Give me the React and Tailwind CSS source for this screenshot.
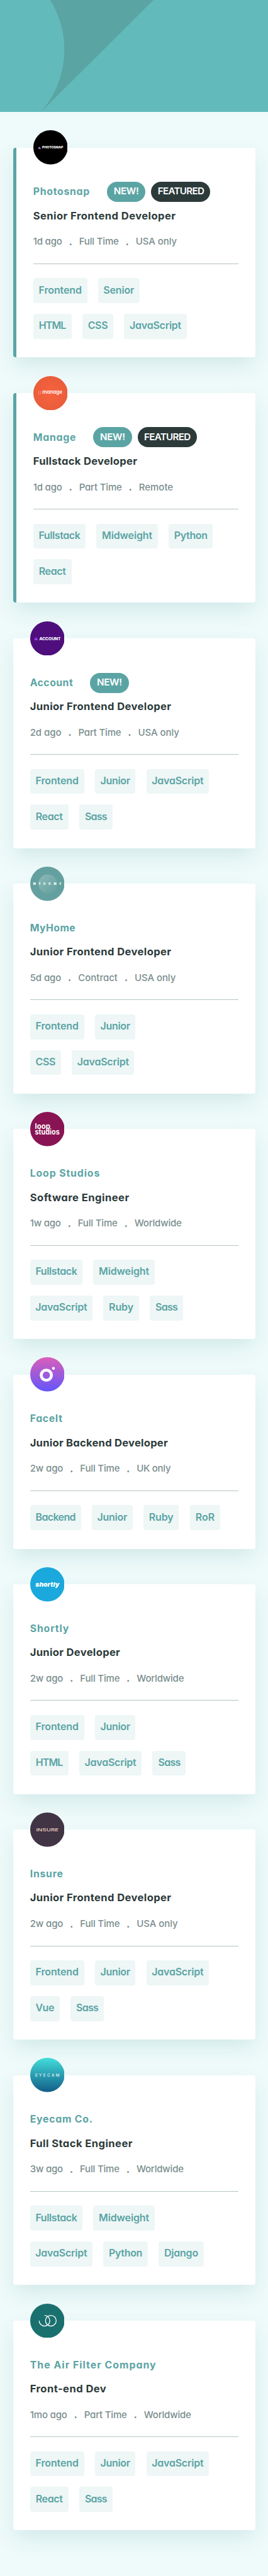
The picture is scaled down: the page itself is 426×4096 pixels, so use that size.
import React, { useLayoutEffect, useRef, useState } from "react";

// Spreads a label's letters so that it takes the given width.
function Fit({ width, className = "", children }) {
  const ref = useRef(null);
  const [spacing, setSpacing] = useState(0);
  useLayoutEffect(() => {
    const natural = ref.current.getBoundingClientRect().width;
    setSpacing((width - natural) / children.length);
  }, []);
  return (
    <span ref={ref} className={`whitespace-pre ${className}`} style={{ letterSpacing: `${spacing}px` }}>
      {children}
    </span>
  );
}

const LOGOS = {
  photosnap: (
    <>
      <circle cx="36" cy="36" r="36" fill="#000" />
      <path d="M10 39 L13 34 L16 39Z" fill="#6d6cf0" />
      <path d="M10 39 L11.6 36.4 L16 39Z" fill="#e88a8a" />
      <text x="18.5" y="38.3" fontSize="6.1" fontWeight="800" fill="#fff" textLength="44" lengthAdjust="spacingAndGlyphs">PHOTOSNAP</text>
    </>
  ),
  manage: (
    <>
      <circle cx="36" cy="36" r="36" fill="url(#manageFill)" />
      <g fill="#fff">
        <circle cx="11.3" cy="33" r="0.8" /><circle cx="15" cy="33" r="0.8" />
        <circle cx="11.3" cy="36.7" r="0.8" /><circle cx="15" cy="36.7" r="0.8" />
      </g>
      <text x="18.8" y="37.5" fontSize="10.4" fontWeight="600" fill="#fff" textLength="42" lengthAdjust="spacingAndGlyphs">manage</text>
    </>
  ),
  account: (
    <>
      <circle cx="36" cy="36" r="36" fill="#4e0f7c" />
      <path d="M8 39.5 L11.5 33 L13 35.6 L14 33.5 L16 39.5Z" fill="#9a3df0" />
      <text x="19" y="39" fontSize="7.6" fontWeight="800" fill="#fff" textLength="45" lengthAdjust="spacingAndGlyphs">ACCOUNT</text>
    </>
  ),
  myhome: (
    <>
      <circle cx="36" cy="36" r="36" fill="#64a09f" />
      <circle cx="37" cy="36" r="19.8" fill="url(#homeFill)" />
      <text x="6.4 17.5 27.8 38.2 49.3 61.2" y="38.2" fontSize="5.8" fontWeight="800" fill="#fff">MYHOME</text>
    </>
  ),
  loop: (
    <>
      <circle cx="36" cy="36" r="36" fill="#891454" />
      <g fill="#fff" fontSize="14.6" fontWeight="700">
        <text x="10" y="35.3" textLength="32" lengthAdjust="spacingAndGlyphs">loop</text>
        <text x="10" y="47.3" textLength="51.6" lengthAdjust="spacingAndGlyphs">studios</text>
      </g>
    </>
  ),
  faceit: (
    <>
      <circle cx="36" cy="36" r="36" fill="url(#faceFill)" />
      <circle cx="33.8" cy="37.7" r="10.7" fill="none" stroke="#fff" strokeWidth="6.1" />
      <circle cx="48.7" cy="23.4" r="2.9" fill="#fff" />
    </>
  ),
  shortly: (
    <>
      <circle cx="36" cy="36" r="36" fill="#1ba8dc" />
      <text x="11" y="40.5" fontSize="12.5" fontWeight="900" fontStyle="italic" fill="#fff" textLength="50" lengthAdjust="spacingAndGlyphs">shortly</text>
    </>
  ),
  insure: (
    <>
      <circle cx="36" cy="36" r="36" fill="#413444" />
      <text x="12.5" y="39.2" fontSize="8.6" fontWeight="500" fill="#f3d3c4" textLength="47" lengthAdjust="spacingAndGlyphs">INSURE</text>
    </>
  ),
  eyecam: (
    <>
      <circle cx="36" cy="36" r="36" fill="url(#eyeFill)" />
      <text x="10.4" y="39.2" fontSize="8.4" fontWeight="400" fill="#fff" textLength="51">EYECAM</text>
    </>
  ),
  airfilter: (
    <>
      <circle cx="36" cy="36" r="36" fill="#1a706f" />
      <g fill="none" stroke="#fff" strokeWidth="1.7">
        <path d="M18.8 35.7 A11.2 11.2 0 1 0 30 24.5" />
        <circle cx="43.3" cy="35.7" r="11.2" />
      </g>
    </>
  ),
};

const TAG = {
  Frontend: ["w-[85.9px]", 68.3],
  Senior: ["w-[65.8px]", 49],
  HTML: ["w-[60.9px]", 42.8],
  CSS: ["w-[49.2px]", 31.6],
  JavaScript: ["w-[99.3px]", 82],
  Fullstack: ["w-[83.4px]", 66],
  Midweight: ["w-[97.3px]", 80],
  Python: ["w-[70.5px]", 53],
  React: ["w-[60.9px]", 43],
  Junior: ["w-[64.5px]", 47.5],
  Sass: ["w-[53px]", 35],
  Ruby: ["w-[56.5px]", 39],
  Backend: ["w-[81.1px]", 63.5],
  RoR: ["w-[48.5px]", 30.2],
  Vue: ["w-[47px]", 29.4],
  Django: ["w-[71.7px]", 54],
};

const META = {
  "1d ago": 46, "2d ago": 49.8, "5d ago": 49.6, "1w ago": 49, "2w ago": 52.6, "3w ago": 52.2, "1mo ago": 59,
  "Full Time": 63, "Part Time": 68, Contract: 62.6,
  "USA only": 65.3, "UK only": 54, Remote: 54.5, Worldwide: 75,
};

const JOBS = [
  { id: "photosnap", name: ["Photosnap", 90.3], fresh: true, featured: true, title: ["Senior Frontend Developer", 226.8], meta: ["1d ago", "Full Time", "USA only"], tags: [["Frontend", "Senior"], ["HTML", "CSS", "JavaScript"]] },
  { id: "manage", name: ["Manage", 68.5], fresh: true, featured: true, title: ["Fullstack Developer", 165.5], meta: ["1d ago", "Part Time", "Remote"], tags: [["Fullstack", "Midweight", "Python"], ["React"]] },
  { id: "account", name: ["Account", 68.5], fresh: true, title: ["Junior Frontend Developer", 224.8], meta: ["2d ago", "Part Time", "USA only"], tags: [["Frontend", "Junior", "JavaScript"], ["React", "Sass"]] },
  { id: "myhome", name: ["MyHome", 72.5], title: ["Junior Frontend Developer", 224.8], meta: ["5d ago", "Contract", "USA only"], tags: [["Frontend", "Junior"], ["CSS", "JavaScript"]] },
  { id: "loop", name: ["Loop Studios", 111.5], title: ["Software Engineer", 158], meta: ["1w ago", "Full Time", "Worldwide"], tags: [["Fullstack", "Midweight"], ["JavaScript", "Ruby", "Sass"]] },
  { id: "faceit", name: ["FaceIt", 52], title: ["Junior Backend Developer", 219.3], meta: ["2w ago", "Full Time", "UK only"], tags: [["Backend", "Junior", "Ruby", "RoR"]] },
  { id: "shortly", name: ["Shortly", 62.5], title: ["Junior Developer", 143.5], meta: ["2w ago", "Full Time", "Worldwide"], tags: [["Frontend", "Junior"], ["HTML", "JavaScript", "Sass"]] },
  { id: "insure", name: ["Insure", 53], title: ["Junior Frontend Developer", 224.8], meta: ["2w ago", "Full Time", "USA only"], tags: [["Frontend", "Junior", "JavaScript"], ["Vue", "Sass"]] },
  { id: "eyecam", name: ["Eyecam Co.", 100], title: ["Full Stack Engineer", 163.2], meta: ["3w ago", "Full Time", "Worldwide"], tags: [["Fullstack", "Midweight"], ["JavaScript", "Python", "Django"]] },
  { id: "airfilter", name: ["The Air Filter Company", 201], title: ["Front-end Dev", 121.5], meta: ["1mo ago", "Part Time", "Worldwide"], tags: [["Frontend", "Junior", "JavaScript"], ["React", "Sass"]] },
];

function Dot() {
  return <span className="w-[27px] text-center text-[17px] font-semibold">.</span>;
}

function JobCard({ job }) {
  return (
    <article
      className={`relative rounded-[4px] bg-white pt-[54.6px] pr-[26.4px] pb-[29.4px] pl-[26.5px] shadow-[0_14px_32px_-3px_rgba(91,164,164,0.2)] ${
        job.featured ? "border-l-[5.3px] border-[#5ba4a4]" : ""
      }`}
    >
      <svg viewBox="0 0 72 72" className="absolute -top-[27.3px] left-[26.5px] size-[54.6px]">
        {LOGOS[job.id]}
      </svg>
      <div className="flex h-[31.9px] items-center">
        <Fit width={job.name[1]} className="text-[15.8px] font-bold text-[#5ba4a4]">{job.name[0]}</Fit>
        {job.fresh && (
          <span className="ml-[27px] flex h-[31.9px] w-[61.4px] items-center justify-center rounded-full bg-[#5ba4a4] pb-[0.5px] text-[15.2px] font-semibold text-white">
            <Fit width={39.8}>NEW!</Fit>
          </span>
        )}
        {job.featured && (
          <span className="ml-[9.1px] flex h-[31.9px] w-[94px] items-center justify-center rounded-full bg-[#2c3a3a] pb-[0.5px] text-[15.2px] font-semibold text-white">
            <Fit width={73.5}>FEATURED</Fit>
          </span>
        )}
      </div>
      <h2 className="flex h-[44px] items-center text-[16.6px] font-bold text-[#2c3a3a]">
        <Fit width={job.title[1]}>{job.title[0]}</Fit>
      </h2>
      <div className="flex h-[39px] items-center text-[15px] font-medium text-[#7b8e8e]">
        <Fit width={META[job.meta[0]]}>{job.meta[0]}</Fit>
        <Dot />
        <Fit width={META[job.meta[1]]}>{job.meta[1]}</Fit>
        <Dot />
        <Fit width={META[job.meta[2]]}>{job.meta[2]}</Fit>
      </div>
      <div className="mt-[14.6px] h-[0.8px] bg-[#b7c4c4]" />
      <div className="mt-[22.9px] flex flex-col gap-[17px]">
        {job.tags.map((row, i) => (
          <div key={i} className="flex gap-[17.3px]">
            {row.map((tag) => (
              <span
                key={tag}
                className={`flex h-[39.7px] items-center justify-center rounded-[4px] bg-[#eef6f6] pb-[3.2px] text-[16px] font-semibold text-[#5ba4a4] ${TAG[tag][0]}`}
              >
                <Fit width={TAG[tag][1]}>{tag}</Fit>
              </span>
            ))}
          </div>
        ))}
      </div>
    </article>
  );
}

export default function App() {
  return (
    <div className="h-[4096px] w-full overflow-hidden bg-[#effafa] font-['Inter',sans-serif] [font-feature-settings:'cv11']">
      <svg width="0" height="0" className="absolute">
        <defs>
          <radialGradient id="manageFill"><stop offset="0" stopColor="#f8623d" /><stop offset="1" stopColor="#ea5d3b" /></radialGradient>
          <linearGradient id="homeFill" x1="0" y1="0" x2="1" y2="1"><stop offset="0" stopColor="#8bb9b7" /><stop offset="1" stopColor="#64a09f" /></linearGradient>
          <linearGradient id="faceFill" x1="0" y1="0" x2="0" y2="1"><stop offset="0" stopColor="#da5fb8" /><stop offset="1" stopColor="#6355fb" /></linearGradient>
          <linearGradient id="eyeFill" x1="0" y1="0" x2="0" y2="1"><stop offset="0" stopColor="#42dedb" /><stop offset="1" stopColor="#125d87" /></linearGradient>
        </defs>
      </svg>
      <header className="h-[177.5px] bg-[#63babb]">
        <svg viewBox="0 0 562 234" preserveAspectRatio="none" className="block h-full w-full">
          <path d="M105.4 0 A198 198 0 0 1 86.5 234 L322 0Z" fill="#5ba4a4" />
        </svg>
      </header>
      <main className="mr-[20.4px] ml-[21.2px] flex flex-col gap-[56.7px] pt-[57.1px]">
        {JOBS.map((job) => (
          <JobCard key={job.id} job={job} />
        ))}
      </main>
    </div>
  );
}
